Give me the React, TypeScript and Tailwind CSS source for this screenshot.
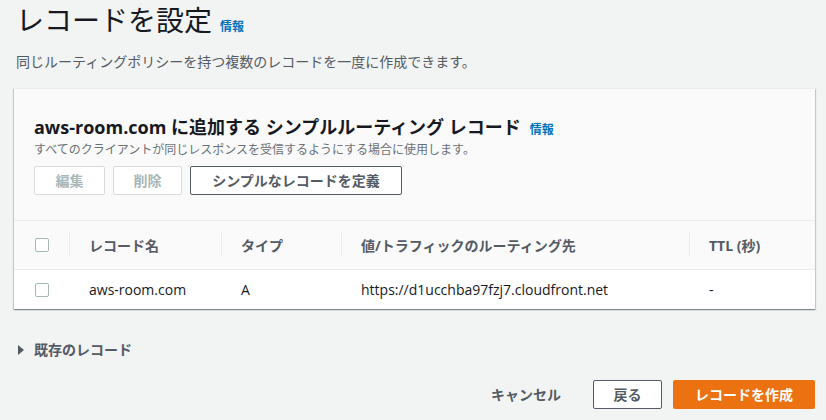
import React from 'react';

const font = { fontFamily: '"Open Sans", "Noto Sans CJK JP", sans-serif' };

const Checkbox = () => (
  <span className="block w-[14px] h-[14px] rounded-[2px] border border-[#aab7b8] bg-white" />
);

const columns = [
  { label: 'レコード名', width: 'w-[152px]' },
  { label: 'タイプ', width: 'w-[120px]' },
  { label: '値/トラフィックのルーティング先', width: 'w-[348px]' },
  { label: 'TTL (秒)', width: 'flex-1' },
];

const row = ['aws-room.com', 'A', 'https://d1ucchba97fzj7.cloudfront.net', '-'];

export default function App() {
  return (
    <div style={font} className="w-[826px] h-[420px] overflow-hidden bg-[#f2f3f3] text-[#16191f] pl-[14px] pr-[11px]">
      {/* Page header */}
      <div className="pl-[2px] pt-[2px] flex items-baseline gap-2">
        <h1 className="text-[28px] leading-[36px] font-normal text-[#16191f]">レコードを設定</h1>
        <span className="text-[12px] font-bold text-[#0073bb]">情報</span>
      </div>
      <p className="pl-[2px] mt-[14px] text-[14px] leading-[20px] text-[#545b64]">
        同じルーティングポリシーを持つ複数のレコードを一度に作成できます。
      </p>

      {/* Card */}
      <div className="mt-[16px] bg-white border-t border-[#eaeded] shadow-[0_1px_1px_0_rgba(0,28,36,0.3),1px_1px_1px_0_rgba(0,28,36,0.15),-1px_1px_1px_0_rgba(0,28,36,0.15)]">
        <div className="bg-[#fafafa] px-[20px] pt-[26px] pb-[25px]">
          <div className="flex items-baseline gap-[9px]">
            <h2 className="text-[18px] leading-[24px] font-bold text-[#16191f]">
              aws-room.com に追加する シンプルルーティング レコード
            </h2>
            <span className="text-[12px] font-bold text-[#0073bb]">情報</span>
          </div>
          <p className="text-[12px] leading-[16px] text-[#687078] mt-[3px]">
            すべてのクライアントが同じレスポンスを受信するようにする場合に使用します。
          </p>
          <div className="flex gap-[8px] mt-[8px]">
            <button className="w-[71px] h-[29px] rounded-[2px] border border-[#d5dbdb] bg-white text-[14px] font-bold text-[#aab7b8]">編集</button>
            <button className="w-[69px] h-[29px] rounded-[2px] border border-[#d5dbdb] bg-white text-[14px] font-bold text-[#aab7b8]">削除</button>
            <button className="w-[212px] h-[29px] rounded-[2px] border border-[#545b64] bg-white text-[14px] font-bold text-[#545b64]">シンプルなレコードを定義</button>
          </div>
        </div>

        {/* Table */}
        <div className="border-t border-[#eaeded] bg-[#fafafa] h-[49px] flex items-center">
          <div className="w-[55px] pl-[21px]"><Checkbox /></div>
          {columns.map((c, i) => (
            <div key={i} className={`${c.width} h-[24px] flex items-center border-l border-[#eaeded] pl-[19px] text-[14px] font-bold text-[#545b64]`}>
              {c.label}
            </div>
          ))}
        </div>
        <div className="border-t border-[#eaeded] bg-white h-[40px] flex items-center text-[14px] text-[#16191f]">
          <div className="w-[55px] pl-[21px]"><Checkbox /></div>
          {row.map((v, i) => (
            <div key={i} className={`${columns[i].width} pl-[20px]`}>{v}</div>
          ))}
        </div>
      </div>

      {/* Existing records */}
      <div className="mt-[30px] pl-[4px] flex items-center gap-[10px] text-[14px] font-bold text-[#545b64]">
        <svg width="6" height="10" viewBox="0 0 6 10"><path d="M0 0 L6 5 L0 10 Z" fill="#545b64" /></svg>
        <span>既存のレコード</span>
      </div>

      {/* Footer */}
      <div className="mt-[20px] flex justify-end items-center">
        <button className="text-[14px] font-bold text-[#545b64] mr-[32px]">キャンセル</button>
        <button className="w-[69px] h-[29px] rounded-[2px] border border-[#545b64] bg-white text-[14px] font-bold text-[#545b64] mr-[11px]">戻る</button>
        <button className="w-[142px] h-[29px] rounded-[2px] bg-[#ec7211] text-[14px] font-bold text-white">レコードを作成</button>
      </div>
    </div>
  );
}
